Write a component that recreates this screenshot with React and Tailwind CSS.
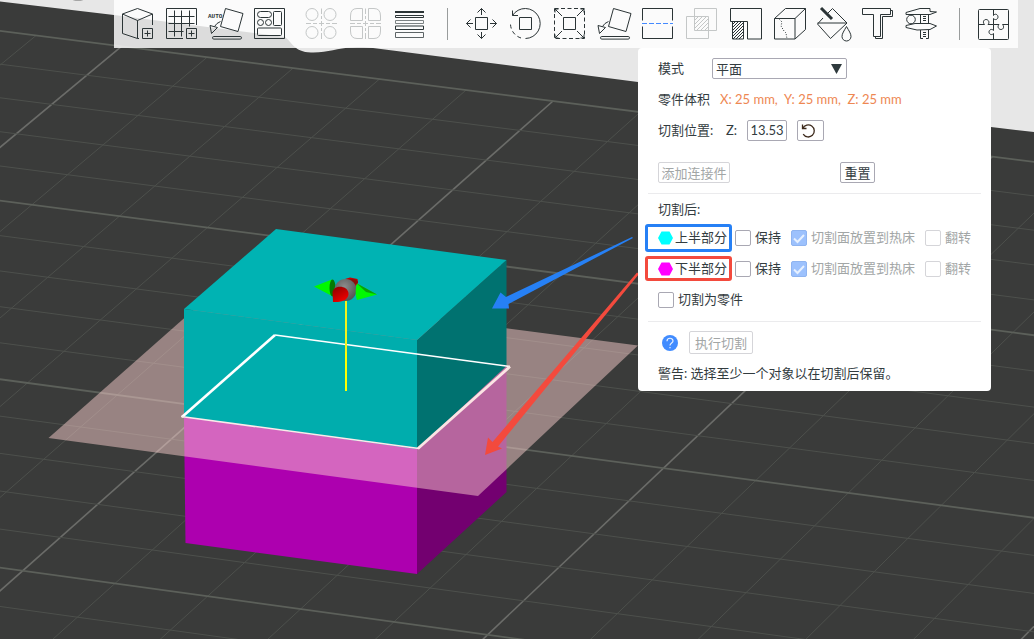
import { useState } from "react";

// bed coordinates (u = column, v = row) to screen
const project = (u, v) => {
  const w = 1 - 0.00176 * u - 0.00429 * v;
  return [(121.5 + 85.33 * u - 35.14 * v) / w, (46.3 + 10.76 * u + 28.59 * v) / w];
};

const range = (from, to) => Array.from({ length: to - from + 1 }, (_, i) => from + i);

function BedLine({ from, to, color, width }) {
  const [x1, y1] = project(...from);
  const [x2, y2] = project(...to);
  return <line x1={x1} y1={y1} x2={x2} y2={y2} stroke={color} strokeWidth={width} />;
}

function Scene() {
  return (
    <svg className="absolute inset-0 h-full w-full" viewBox="0 0 1034 639" preserveAspectRatio="xMinYMin slice" aria-hidden="true">
      <defs>
        <radialGradient id="ball" cx="0.45" cy="0.35" r="0.7">
          <stop offset="0" stopColor="#8c8c8c" />
          <stop offset="1" stopColor="#4e4e4e" />
        </radialGradient>
        <linearGradient id="redCone" x1="0" y1="0" x2="0.6" y2="1">
          <stop offset="0" stopColor="#8a0000" />
          <stop offset="1" stopColor="#f00000" />
        </linearGradient>
      </defs>
      <rect width="1034" height="639" fill="#e7e7e7" />
      <ellipse cx="78" cy="-1" rx="6" ry="2" fill="#a5a5a5" />
      <path d="M0 1.500L114 15L285 37C292 42 294 52 311 52.500C328 53 336 48 353 47.500C362 47 367 47.500 373 48L638 82L991 127L1034 132V639H0Z" fill="#3a3b3a" />

      {range(-2, 20).map((u) => (
        <BedLine key={u} from={[u, 0]} to={[u, 20]} color={u % 5 === 0 ? "#6b6c69" : "#4d504c"} width={u % 5 === 0 ? 1.6 : 1} />
      ))}
      {range(0, 20).map((v) => (
        <BedLine key={v} from={[-4, v]} to={[20, v]} color={v % 5 === 0 ? "#5c605a" : "#4d504c"} width={v % 5 === 0 ? 1.8 : 1} />
      ))}

      {/* lower part */}
      <path d="M184 417L417 448V574L185.500 543Z" fill="#ad00af" />
      <path d="M417 448L506.500 366V492L417 574Z" fill="#730070" />
      {/* cut plane */}
      <path d="M48.500 438L216 290L638 345.500L478 496Z" fill="rgb(255 212 208)" fillOpacity="0.48" />
      {/* upper part */}
      <path d="M184 309L417 340V449L184 417Z" fill="#00adad" />
      <path d="M417 340L506.500 260V366L417 449Z" fill="#007270" />
      <path d="M276 229L506.500 260L417 340L184 309Z" fill="#00b3b3" />
      <path d="M275 335L510 366.500" stroke="#fff" strokeWidth="1.600" />
      <path d="M182 417L275 335" stroke="#fff" strokeWidth="2.600" />
      <path d="M181 416.500L419 448.500" stroke="#fde9ea" strokeWidth="1.600" />
      <path d="M418 448.500L510 366.500" stroke="#fbe4e4" strokeWidth="2.800" />

      {/* gizmo */}
      <path d="M346 300V391" stroke="#f4f41a" strokeWidth="2" />
      <path d="M346 352V391" stroke="#ffff00" strokeWidth="2" />
      <path d="M314 286.500L332 279.500L332 296Z" fill="#00f800" />
      <ellipse cx="332.500" cy="288" rx="3" ry="8.500" fill="#047a04" />
      <path d="M345 279L350 277.500L357.500 279L358 283L354 289Z" fill="#c40000" />
      <ellipse cx="352" cy="282" rx="6" ry="3" fill="#8e0a0a" />
      <circle cx="345.500" cy="290" r="11" fill="url(#ball)" />
      <path d="M333 302L332.500 292C334 285 347 285 348.500 293C349 299 343 302.500 333 302Z" fill="url(#redCone)" />
      <path d="M357 283.500L377 294.500L357 300C355 295 355.500 288 357 283.500Z" fill="#00f800" />
      <path d="M357 283.500L377 294.500L366 292Z" fill="#0a9e0a" />

      {/* callout arrows */}
      <path d="M632 237L506 297L500.500 292.500L492 308.500L509 308.500L508.500 304L633 238Z" fill="#2680f5" />
      <path d="M637 272.500L492.500 442L488 437.500L485 455L502 448.500L498 446.500L639 274Z" fill="#f34a3d" />
    </svg>
  );
}

function PlusBox() {
  return <path d="M20.500 20.500H30.500V30.500H20.500ZM22.500 25.500H28.500M25.500 22.500V28.500" />;
}

function FaceDown() {
  return (
    <>
      <path d="M15.500 .5L33 5.500L28 23.500L10.500 18.500ZM10.500 13.500Q6.500 15 4.500 18.500M0 17.500L7.500 19.500L1.500 25.500Z" />
      <rect x="2.500" y="28.500" width="29" height="2.600" rx="1.300" />
    </>
  );
}

const icons = {
  addCube: (
    <>
      <path d="M30.500 17V6L15.500 .5L.5 6V25.500L15.500 30.500H17M.5 6L15.500 12.500L30.500 6M15.500 12.500V30.500" />
      <PlusBox />
    </>
  ),
  addPlate: (
    <>
      <path d="M30.500 17V.5H.5V30.500H17M2.500 8.500H28.500M2.500 15.500H28.500M2.500 23.500H17.500M8.500 2.500V28.500M15.500 2.500V28.500M23.500 2.500V18.500" />
      <PlusBox />
    </>
  ),
  autoOrient: (
    <>
      <text x="-2" y="10" fontSize="6" fontWeight="700" fill="currentColor" stroke="none" className="font-['Liberation_Mono',monospace]">AUTO</text>
      <FaceDown />
    </>
  ),
  arrange: (
    <>
      <path d="M.5 .5H30.500V30.500H.5Z" />
      <rect x="3.500" y="3.500" width="14" height="6" rx="3" />
      <rect x="19.500" y="3.500" width="8" height="14" rx="1" />
      <circle cx="6.500" cy="14.500" r="3" />
      <circle cx="14.500" cy="14.500" r="3" />
      <rect x="3.500" y="20" width="24" height="7.500" rx="1" />
    </>
  ),
  splitObjects: (
    <>
      <circle cx="7" cy="6.500" r="6" />
      <circle cx="25" cy="6.500" r="6" />
      <circle cx="7" cy="24.500" r="6" />
      <circle cx="25" cy="24.500" r="6" />
      <path d="M16.500 .5V6M16.500 8V11M16.500 13V18M16.500 20V23M16.500 25V31M1 15.500H6M8 15.500H12M14 15.500H19M21 15.500H25M27 15.500H32" />
    </>
  ),
  splitParts: (
    <>
      <path d="M13.500 12.500H1.500V8Q1.500 .5 8 .5H13.500ZM19.500 12.500H31.500V8Q31.500 .5 25 .5H19.500ZM13.500 18.500H1.500V23Q1.500 30.500 8 30.500H13.500ZM19.500 18.500H31.500V23Q31.500 30.500 25 30.500H19.500Z" />
      <path d="M16.500 .5V6M16.500 8V11M16.500 13V18M16.500 20V23M16.500 25V31M1 15.500H6M8 15.500H12M14 15.500H19M21 15.500H25M27 15.500H32" />
    </>
  ),
  layers: (
    <>
      <path d="M2 4H31" strokeWidth="2" />
      <path d="M2.500 7.500H30.500V9.500H2.500Z" />
      <path d="M2.500 12.500H30.500V15.500H2.500Z" stroke="#7d8384" />
      <path d="M2.500 18H30.500V21.500H2.500Z" />
      <path d="M2.500 24.500H30.500V29.500H2.500Z" stroke="#5d6466" />
    </>
  ),
  move: <path d="M9.500 9.500H21.500V21.500H9.500ZM15.500 7V.5M11.500 4.500L15.500 .5L19.500 4.500M15.500 24V30.500M11.500 26.500L15.500 30.500L19.500 26.500M7 15.500H.5M4.500 11.500L.5 15.500L4.500 19.500M24 15.500H30.500M26.500 11.500L30.500 15.500L26.500 19.500" />,
  rotate: (
    <>
      <path d="M9.500 9.500H21.500V21.500H9.500ZM2.500 7.500A15 15 0 1 1 15.500 30.500M2.500 2.500V7.500H8" />
      <path d="M11 30A15 15 0 0 1 .5 15" strokeDasharray="4 3" />
    </>
  ),
  scale: (
    <>
      <path d="M.5 .5H30.500V30.500H.5Z" strokeDasharray="4 2.500" />
      <path d="M9.500 9.500H21.500V21.500H9.500ZM1 1L8 8M30 1L23 8M1 30L8 23M30 30L23 23M1 4.500V1H4.500M26.500 1H30V4.500M1 26.500V30H4.500M26.500 30H30V26.500" />
    </>
  ),
  placeOnFace: <FaceDown />,
  cut: (
    <>
      <path d="M.5 12.500V.5H30.500V12.500M.5 18.500V30.500H30.500V18.500" />
      <path d="M0 15.500H31" stroke="#448aff" strokeDasharray="5 2" />
    </>
  ),
  boolean: (
    <>
      <path d="M8.500 .5H30.500V22.500H8.500ZM.5 8.500H22.500V30.500H.5Z" />
      <path d="M8.500 12.500L12.500 8.500M8.500 16.500L16.500 8.500M8.500 20.500L20.500 8.500M10.500 22.500L22.500 10.500M14.500 22.500L22.500 14.500M18.500 22.500L22.500 18.500" />
    </>
  ),
  support: (
    <>
      <path d="M.5 .5H31.500V31H17.500V13.500H.5ZM2.500 13.500H13.500V31H2.500Z" />
      <path d="M2.500 16.500L5.500 13.500M2.500 19.500L8.500 13.500M2.500 22.500L11.500 13.500M2.500 25.500L13.500 14.500M2.500 28.500L13.500 17.500M3 31L13.500 20.500M6 31L13.500 23.500M9 31L13.500 26.500" />
    </>
  ),
  seam: (
    <>
      <path d="M.5 10.500H21V31H.5ZM.5 10.500L11.500 .5H31.500V21.500L21 31M21 10.500L31.500 .5" />
      <path d="M5.500 11.500L8 14L7 18L10 23L12 25L13 31" strokeDasharray="1 1.500" />
    </>
  ),
  paint: (
    <>
      <path d="M10 5L14.500 .5L29 15L12.500 30.500L-.5 16L5 10M-.5 15H29M28.500 18.500C26 23 24 25.500 24 28.500A4.500 4.500 0 0 0 33 28.500C33 25.500 31 23 28.500 18.500Z" />
      <path d="M3 0L14 11" strokeWidth="3" />
    </>
  ),
  text: <path d="M.5 .5H28.500V6.500H18.500V28.500H11.500V6.500H.5ZM28.500 2.500H30.500V8.500H20.500V30.500H13.500V28.500" strokeLinejoin="round" />,
  measure: (
    <>
      <circle cx="5" cy="11.500" r="4.300" />
      <path d="M0 4.500L14 .5H24V3.500L30.500 4L24 6.500H0ZM0 19.500V17.500L9 15.500H24L30.500 18L24 21.500L11 22Z" />
      <path d="M14.500 6.500V15.500M22.500 6.500V15.500M14.500 22V30.500H17M22.500 22V30.500H20M17 8.500H20M17 10.500H20M17 12.500H20M17 24.500H20M17 26.500H20M17 28.500H20" />
    </>
  ),
  assembly: (
    <>
      <rect x=".5" y="1.500" width="30" height="30" rx="1" />
      <path d="M15.500 1.500V7.500C17 5 20 6.500 20 9C20 11.500 17 12.500 15.500 10.500V16.500M15.500 16.500H10C12 14.500 10.500 11.500 8 11.500C5.500 11.500 4.500 14.500 6.500 16.500H.5M15.500 16.500H21C19 18.500 20.500 21.500 23 21.500C25.500 21.500 26.500 18.500 24.500 16.500H30.500M15.500 16.500V22.500C14 20.500 11 21.500 11 24C11 26.500 14 27.500 15.500 25.500V31.500" />
    </>
  ),
};

function ToolButton({ name, label, disabled }) {
  return (
    <button type="button" aria-label={label} disabled={disabled} className="flex h-12 w-11 shrink-0 items-center justify-center text-[#2b3436] disabled:text-[#c4c7c7]">
      <svg width="32" height="32" viewBox="0 0 32 32" fill="none" stroke="currentColor" className="overflow-visible">
        {icons[name]}
      </svg>
    </button>
  );
}

function Toolbar() {
  return (
    <div role="toolbar" className="ml-[114px] mr-4 flex h-12 items-center justify-center bg-white/82">
      <ToolButton name="addCube" label="添加" />
      <ToolButton name="addPlate" label="添加盘" />
      <ToolButton name="autoOrient" label="自动朝向" />
      <ToolButton name="arrange" label="整理" />
      <div className="ml-[7px] flex">
        <ToolButton name="splitObjects" label="拆分为对象" disabled />
        <ToolButton name="splitParts" label="拆分为零件" disabled />
        <ToolButton name="layers" label="可变层高" />
      </div>
      <div className="ml-4 mr-3 h-8 w-px bg-[#999c9c]" />
      <ToolButton name="move" label="移动" />
      <ToolButton name="rotate" label="旋转" />
      <ToolButton name="scale" label="缩放" />
      <ToolButton name="placeOnFace" label="选择底面" />
      <ToolButton name="cut" label="切割" />
      <ToolButton name="boolean" label="网格布尔" disabled />
      <ToolButton name="support" label="支撑绘制" />
      <ToolButton name="seam" label="缝绘制" />
      <ToolButton name="paint" label="上色" />
      <ToolButton name="text" label="文字" />
      <ToolButton name="measure" label="测量" />
      <div className="mx-[15px] h-8 w-px bg-[#999c9c]" />
      <div className="-ml-[3px] mr-px flex">
        <ToolButton name="assembly" label="装配视图" />
      </div>
    </div>
  );
}

function Check({ label, checked, disabled, onChange }) {
  return (
    <label className={`flex items-center gap-1 whitespace-nowrap ${disabled ? "text-[#a2a6a6]" : ""}`}>
      <span className="grid shrink-0">
        <input
          type="checkbox"
          checked={checked}
          disabled={disabled}
          onChange={(e) => onChange?.(e.target.checked)}
          className="col-start-1 row-start-1 size-4 appearance-none rounded-xs border border-[#a9a8b3] bg-white checked:border-[#8fb4f0] checked:bg-[#9cc1fd] disabled:border-[#d5d5d9] checked:disabled:border-[#8fb4f0]"
        />
        {checked && (
          <svg viewBox="0 0 16 16" fill="none" stroke="#e6f0ff" strokeWidth="2" className="pointer-events-none col-start-1 row-start-1 size-4">
            <path d="M3 8.500L6.500 12L13 5" />
          </svg>
        )}
      </span>
      {label}
    </label>
  );
}

function PartRow({ name, color, boxClass }) {
  const [keep, setKeep] = useState(false);
  return (
    <div className="flex h-[31px] items-center">
      <div className={`-ml-[13px] flex w-[87px] shrink-0 items-center gap-0.5 rounded-[3px] border-3 pl-[10px] whitespace-nowrap ${boxClass}`}>
        <svg width="15" height="14" viewBox="0 0 15 14" fill={color} className="shrink-0">
          <path d="M3.500 .5H11.500L15 7L11.500 13.500H3.500L0 7Z" />
        </svg>
        {name}
      </div>
      <div className="ml-[3px] flex gap-[10px]">
        <Check label="保持" checked={keep} onChange={setKeep} />
        <Check label="切割面放置到热床" checked disabled />
        <Check label="翻转" checked={false} disabled />
      </div>
    </div>
  );
}

function CutPanel() {
  const [mode, setMode] = useState("plane");
  const [z, setZ] = useState("13.53");
  const [asParts, setAsParts] = useState(false);

  return (
    <section className="mr-[43px] ml-auto w-[353px] rounded bg-white px-5 pt-[5px] pb-[2px]">
      <div className="flex h-[31px] items-center">
        <label htmlFor="mode" className="w-[54px]">模式</label>
        <div className="grid w-[135px]">
          <select
            id="mode"
            value={mode}
            onChange={(e) => setMode(e.target.value)}
            className="col-start-1 row-start-1 h-[21px] appearance-none rounded-xs border border-[#a9a8b3] bg-white pl-[3px] leading-[18px]"
          >
            <option value="plane">平面</option>
            <option value="dovetail">燕尾榫</option>
          </select>
          <svg width="11" height="10" viewBox="0 0 11 10" fill="#2f3a3d" className="pointer-events-none col-start-1 row-start-1 mr-[5px] self-center justify-self-end">
            <path d="M0 0H11L5.500 10Z" />
          </svg>
        </div>
      </div>
      <div className="flex h-[31px] items-center gap-[10px]">
        <span>零件体积</span>
        <span className="whitespace-pre text-[#ee8752]">X: 25 mm,  Y: 25 mm,  Z: 25 mm</span>
      </div>
      <div className="flex h-[31px] items-center">
        <span className="w-[68px]">切割位置:</span>
        <label htmlFor="z" className="w-[21px]">Z:</label>
        <input id="z" value={z} onChange={(e) => setZ(e.target.value)} className="h-[21px] w-10 rounded-xs border border-[#a9a8b3] pb-0.5 text-center" />
        <button type="button" aria-label="复位" className="ml-[10px] flex h-[21px] w-[27px] items-center rounded-xs border border-[#a9a8b3] pl-[3px]">
          <svg width="16" height="16" viewBox="0 0 16 16" fill="none" stroke="#3d2a1c" strokeWidth="1.300">
            <path d="M1.500 1.500V5.500H5.500M1.800 5.500A6 6 0 1 1 2.200 11.200" />
          </svg>
        </button>
      </div>
      <div className="mt-[11px] flex h-[31px] items-center">
        <button type="button" disabled className="h-[21px] w-[72px] rounded-xs border border-[#d5d5d9] leading-[18px] text-[#a2a6a6]">添加连接件</button>
        <button type="button" className="ml-[110px] h-[21px] w-[35px] rounded-xs border border-[#a9a8b3] leading-[18px]">重置</button>
      </div>

      <div className="-mx-[10px] mt-[5px] border-t border-[#ebebed]" />
      <div className="mt-1 flex h-6 items-center">切割后:</div>
      <PartRow name="上半部分" color="#00ffff" boxClass="h-7 border-[#2680f5]" />
      <PartRow name="下半部分" color="#ff00ff" boxClass="h-[25px] border-[#f34a3d]" />
      <div className="flex h-[31px] items-center">
        <Check label="切割为零件" checked={asParts} onChange={setAsParts} />
      </div>

      <div className="-mx-[10px] mt-[6px] border-t border-[#ebebed]" />
      <div className="mt-[5px] flex h-[31px] items-center gap-[11px] pl-1">
        <button type="button" aria-label="帮助" className="size-4">
          <svg viewBox="0 0 16 16" fill="none" className="size-4">
            <circle cx="8" cy="8" r="8" fill="#418cff" />
            <path d="M5 6.200C5 2.300 11 2.300 11 6C11 8 8 8 8 10.500M8 12V13.200" stroke="#e8f1ff" strokeWidth="1.200" />
          </svg>
        </button>
        <button type="button" disabled className="h-[23px] w-16 rounded-xs border border-[#d5d5d9] leading-5 text-[#a2a6a6]">执行切割</button>
      </div>
      <p className="flex h-[31px] items-center">警告: 选择至少一个对象以在切割后保留。</p>
    </section>
  );
}

export default function App() {
  return (
    <main className="relative min-h-screen overflow-hidden bg-[#3a3b3a] font-[Lato,'Noto_Sans_CJK_SC',sans-serif] text-[13px] text-[#333c3f]">
      <Scene />
      <div className="relative">
        <Toolbar />
        <CutPanel />
      </div>
    </main>
  );
}
